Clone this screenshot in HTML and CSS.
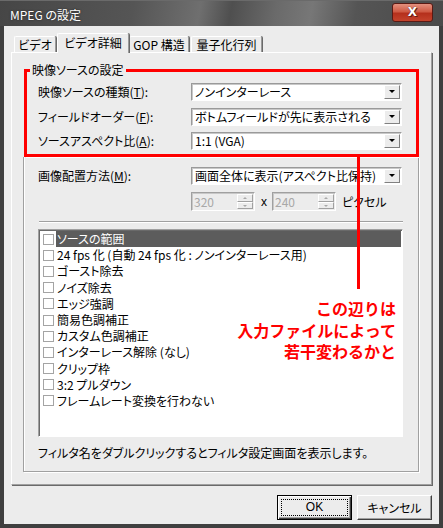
FILE: index.html
```html
<!DOCTYPE html>
<html lang="ja">
<head>
<meta charset="UTF-8">
<title>MPEG の設定</title>
<link rel="stylesheet" href="styles.css">
</head>
<body>
<div class="window">
    <div class="titlebar">
        <span class="title">MPEG の設定</span>
        <span class="close">X</span>
    </div>

    <div class="client">
        <div class="tabs">
            <div class="tab t1">ビデオ</div>
            <div class="tab t2 active">ビデオ詳細</div>
            <div class="tab t3">GOP 構造</div>
            <div class="tab t4">量子化行列</div>
        </div>

        <div class="panel">
            <!-- 映像ソースの設定 -->
            <div class="group">
                <div class="legend">映像ソースの設定</div>
                <div class="form-grid">
                    <label>映像ソースの種類(<u>T</u>):</label>
                    <div class="combo"><span>ノンインターレース</span><i class="drop"></i></div>
                    <label>フィールドオーダー(<u>F</u>):</label>
                    <div class="combo"><span>ボトムフィールドが先に表示される</span><i class="drop"></i></div>
                    <label>ソースアスペクト比(<u>A</u>):</label>
                    <div class="combo"><span>1:1 (VGA)</span><i class="drop"></i></div>
                </div>
            </div>

            <div class="box">
                <div class="form-row">
                    <label>画像配置方法(<u>M</u>):</label>
                    <div class="combo"><span>画面全体に表示(アスペクト比保持)</span><i class="drop"></i></div>
                </div>
                <div class="size-row">
                    <div class="spin"><span class="val">320</span><span class="arrows"><i class="up"></i><i class="down"></i></span></div>
                    <span class="times">x</span>
                    <div class="spin"><span class="val">240</span><span class="arrows"><i class="up"></i><i class="down"></i></span></div>
                    <span class="unit">ピクセル</span>
                </div>
                <div class="sep"></div>
                <ul class="filters">
                    <li class="selected"><span class="cb"></span><span class="name">ソースの範囲</span></li>
                    <li><span class="cb"></span><span class="name">24 fps 化 (自動 24 fps 化 : ノンインターレース用)</span></li>
                    <li><span class="cb"></span><span class="name">ゴースト除去</span></li>
                    <li><span class="cb"></span><span class="name">ノイズ除去</span></li>
                    <li><span class="cb"></span><span class="name">エッジ強調</span></li>
                    <li><span class="cb"></span><span class="name">簡易色調補正</span></li>
                    <li><span class="cb"></span><span class="name">カスタム色調補正</span></li>
                    <li><span class="cb"></span><span class="name">インターレース解除 (なし)</span></li>
                    <li><span class="cb"></span><span class="name">クリップ枠</span></li>
                    <li><span class="cb"></span><span class="name">3:2 プルダウン</span></li>
                    <li><span class="cb"></span><span class="name">フレームレート変換を行わない</span></li>
                </ul>
                <p class="hint">フィルタ名をダブルクリックするとフィルタ設定画面を表示します。</p>
            </div>

            <!-- 赤い注釈 -->
            <div class="note-box"></div>
            <div class="note-line"></div>
            <div class="note">この辺りは<br>入力ファイルによって<br>若干変わるかと</div>
        </div>

        <div class="buttons">
            <button class="btn default"><span class="focus">OK</span></button>
            <button class="btn">キャンセル</button>
        </div>
    </div>
</div>
</body>
</html>
```

FILE: styles.css
```css
* {
    box-sizing: border-box;
}

body {
    margin: 0;
    background: #3d3d3d;
    font-family: "Noto Sans CJK JP", sans-serif;
    font-size: 12px;
    font-feature-settings: "palt";
    color: #000;
}

.window {
    width: 443px;
    height: 528px;
    background: #3f3f3f;
    display: flex;
    flex-direction: column;
}

/* タイトルバー */
.titlebar {
    height: 26px;
    flex: none;
    display: flex;
    align-items: flex-start;
    justify-content: space-between;
    padding: 0 10px 0 10px;
    background: linear-gradient(100deg, #464646 0%, #555 30%, #6f6f6f 45%, #4f4f4f 52%, #6a6a6a 62%, #777 70%, #555 80%, #4a4a4a 100%);
    border-top: 1px solid #6a6a6a;
}

.title {
    color: #fff;
    line-height: 16px;
    margin-top: 6px;
    text-shadow: 0 0 2px #222;
}

.close {
    width: 41px;
    height: 19px;
    margin-top: 2px;
    border: 1px solid #5a1a14;
    border-radius: 3px;
    background: linear-gradient(#e3907e 0%, #cf5a44 45%, #b5301c 55%, #c4432c 100%);
    color: #fff;
    font-family: "DejaVu Sans", sans-serif;
    font-weight: bold;
    font-size: 12px;
    line-height: 17px;
    text-align: center;
    text-shadow: 0 0 1px #4a0d08, 1px 1px 0 #6a1a10;
}

.client {
    flex: 1;
    margin: 0 4px 4px;
    background: #ececec;
    padding: 7px 7px 0 7px;
}

/* タブ */
.tabs {
    height: 19px;
    display: flex;
    align-items: flex-start;
    padding-left: 3px;
}

.tab {
    height: 16px;
    margin-top: 3px;
    line-height: 15px;
    text-align: center;
    background: #ececec;
    border-top: 1px solid #fff;
    border-left: 1px solid #fff;
    border-right: 1px solid #9a9a9a;
    border-radius: 2px 2px 0 0;
    box-shadow: 1px 0 0 #6a6a6a;
}

.t1 { width: 42px; }
.t2 { width: 72px; margin-left: 1px; }
.t3 { width: 60px; }
.t4 { width: 71px; margin-left: 2px; }

.tab.active {
    height: 20px;
    margin-top: 0;
    line-height: 17px;
    position: relative;
    z-index: 2;
}

.panel {
    position: relative;
    width: 421px;
    height: 433px;
    border-top: 1px solid #fff;
    border-left: 1px solid #fff;
    border-right: 1px solid #a0a0a0;
    border-bottom: 1px solid #a0a0a0;
    box-shadow: 1px 1px 0 #6a6a6a;
}

/* グループ枠 */
.group {
    position: relative;
    margin: 17px 0 0 13px;
    width: 393px;
    height: 87px;
    border: 1px solid #a0a0a0;
    box-shadow: inset 1px 1px 0 #fff, 1px 1px 0 #fff;
    padding: 12px 0 0 12px;
}

.legend {
    position: absolute;
    top: -8px;
    left: 4px;
    padding: 0 2px;
    line-height: 14px;
    background: #ececec;
    z-index: 3;
}

.form-grid {
    display: grid;
    grid-template-columns: 153px 211px;
    row-gap: 6.5px;
}

label {
    line-height: 18px;
    white-space: nowrap;
}

.combo {
    height: 18px;
    background: #fff;
    border: 1px solid;
    border-color: #9a9a9a #fff #fff #9a9a9a;
    box-shadow: inset 1px 1px 0 #c8c8c8;
    display: flex;
    align-items: center;
    justify-content: space-between;
    padding: 0 1px 0 3px;
    white-space: nowrap;
}

.combo span {
    line-height: 16px;
}

.drop {
    width: 16px;
    height: 14px;
    background: #ececec;
    border: 1px solid;
    border-color: #fff #808080 #808080 #fff;
    position: relative;
}

.drop::after {
    content: "";
    position: absolute;
    left: 4px;
    top: 4px;
    border-left: 3px solid transparent;
    border-right: 3px solid transparent;
    border-top: 3px solid #000;
}

.box {
    margin-left: 11px;
    width: 396px;
    height: 315px;
    border: 1px solid #a0a0a0;
    border-top: none;
    box-shadow: inset 1px 0 0 #fff, 1px 1px 0 #fff;
    padding: 10px 0 0 14px;
}

.form-row {
    display: grid;
    grid-template-columns: 153px 211px;
}

.size-row {
    display: flex;
    align-items: center;
    margin-top: 7px;
    padding-left: 153px;
    height: 19px;
}

.spin {
    width: 64px;
    height: 19px;
    display: flex;
    border: 1px solid;
    border-color: #a0a0a0 #fff #fff #a0a0a0;
    box-shadow: inset 1px 1px 0 #c8c8c8;
    padding: 1px;
}

.val {
    flex: 1;
    color: #a8a8a8;
    line-height: 15px;
    padding-left: 1px;
}

.arrows {
    width: 16px;
    display: flex;
    flex-direction: column;
}

.arrows i {
    flex: 1;
    border: 1px solid;
    border-color: #fff #a0a0a0 #a0a0a0 #fff;
    position: relative;
}

.arrows i::after {
    content: "";
    position: absolute;
    left: 5px;
    top: 2px;
    border-left: 2px solid transparent;
    border-right: 2px solid transparent;
}

.arrows .up::after { border-bottom: 2px solid #a8a8a8; }
.arrows .down::after { border-top: 2px solid #a8a8a8; }

.times {
    margin: 0 5px 0 6px;
    font-family: "Liberation Sans", sans-serif;
}

.unit {
    margin-left: 6px;
}

.sep {
    margin: 10px 0 0 1px;
    width: 364px;
    height: 2px;
    border-top: 1px solid #a0a0a0;
    border-bottom: 1px solid #fff;
}

/* フィルタ一覧 */
.filters {
    list-style: none;
    margin: 6px 0 0 0;
    padding: 1px 0 0 0;
    width: 365px;
    height: 208px;
    background: #fff;
    border: 1px solid;
    border-color: #a0a0a0 #fff #fff #a0a0a0;
    box-shadow: inset 1px 1px 0 #6a6a6a;
}

.filters li {
    height: 16.2px;
    display: flex;
    align-items: center;
    padding-left: 3px;
    white-space: nowrap;
}

.cb {
    width: 11px;
    height: 11px;
    flex: none;
    border: 1px solid #a4a4a4;
    background: #fff;
    margin-left: 1px;
}

.name {
    flex: 1;
    height: 100%;
    line-height: 16px;
    padding-left: 1px;
    margin-left: 2px;
}

.selected .name {
    background: #5c5c5c;
    color: #fff;
    margin-right: 1px;
}

.hint {
    margin: 8px 0 0 0;
    line-height: 16px;
}

/* 赤い注釈 */
.note-box {
    position: absolute;
    left: 12px;
    top: 16px;
    width: 395px;
    height: 88px;
    border: 3px solid #f00;
    z-index: 2;
}

.note-line {
    position: absolute;
    left: 345px;
    top: 103px;
    width: 3px;
    height: 133px;
    background: #f00;
    z-index: 2;
}

.note {
    position: absolute;
    left: 150px;
    top: 245px;
    width: 234px;
    text-align: right;
    color: #f00;
    font-weight: bold;
    font-size: 16px;
    line-height: 21.5px;
    font-feature-settings: normal;
    z-index: 2;
}

/* ボタン */
.buttons {
    display: flex;
    justify-content: flex-end;
    gap: 5px;
    margin-top: 10px;
}

.btn {
    width: 75px;
    height: 25px;
    padding: 0;
    font: inherit;
    background: #ececec;
    border: 1px solid;
    border-color: #fff #404040 #404040 #fff;
    box-shadow: inset -1px -1px 0 #a0a0a0;
    color: #000;
}

.btn.default {
    border: 1px solid #000;
    box-shadow: inset 1px 1px 0 #fff, inset -1px -1px 0 #404040, inset -2px -2px 0 #a0a0a0;
    padding: 3px;
}

.focus {
    display: block;
    height: 100%;
    border: 1px dotted #000;
    line-height: 15px;
    font-family: "Liberation Sans", sans-serif;
}
```
